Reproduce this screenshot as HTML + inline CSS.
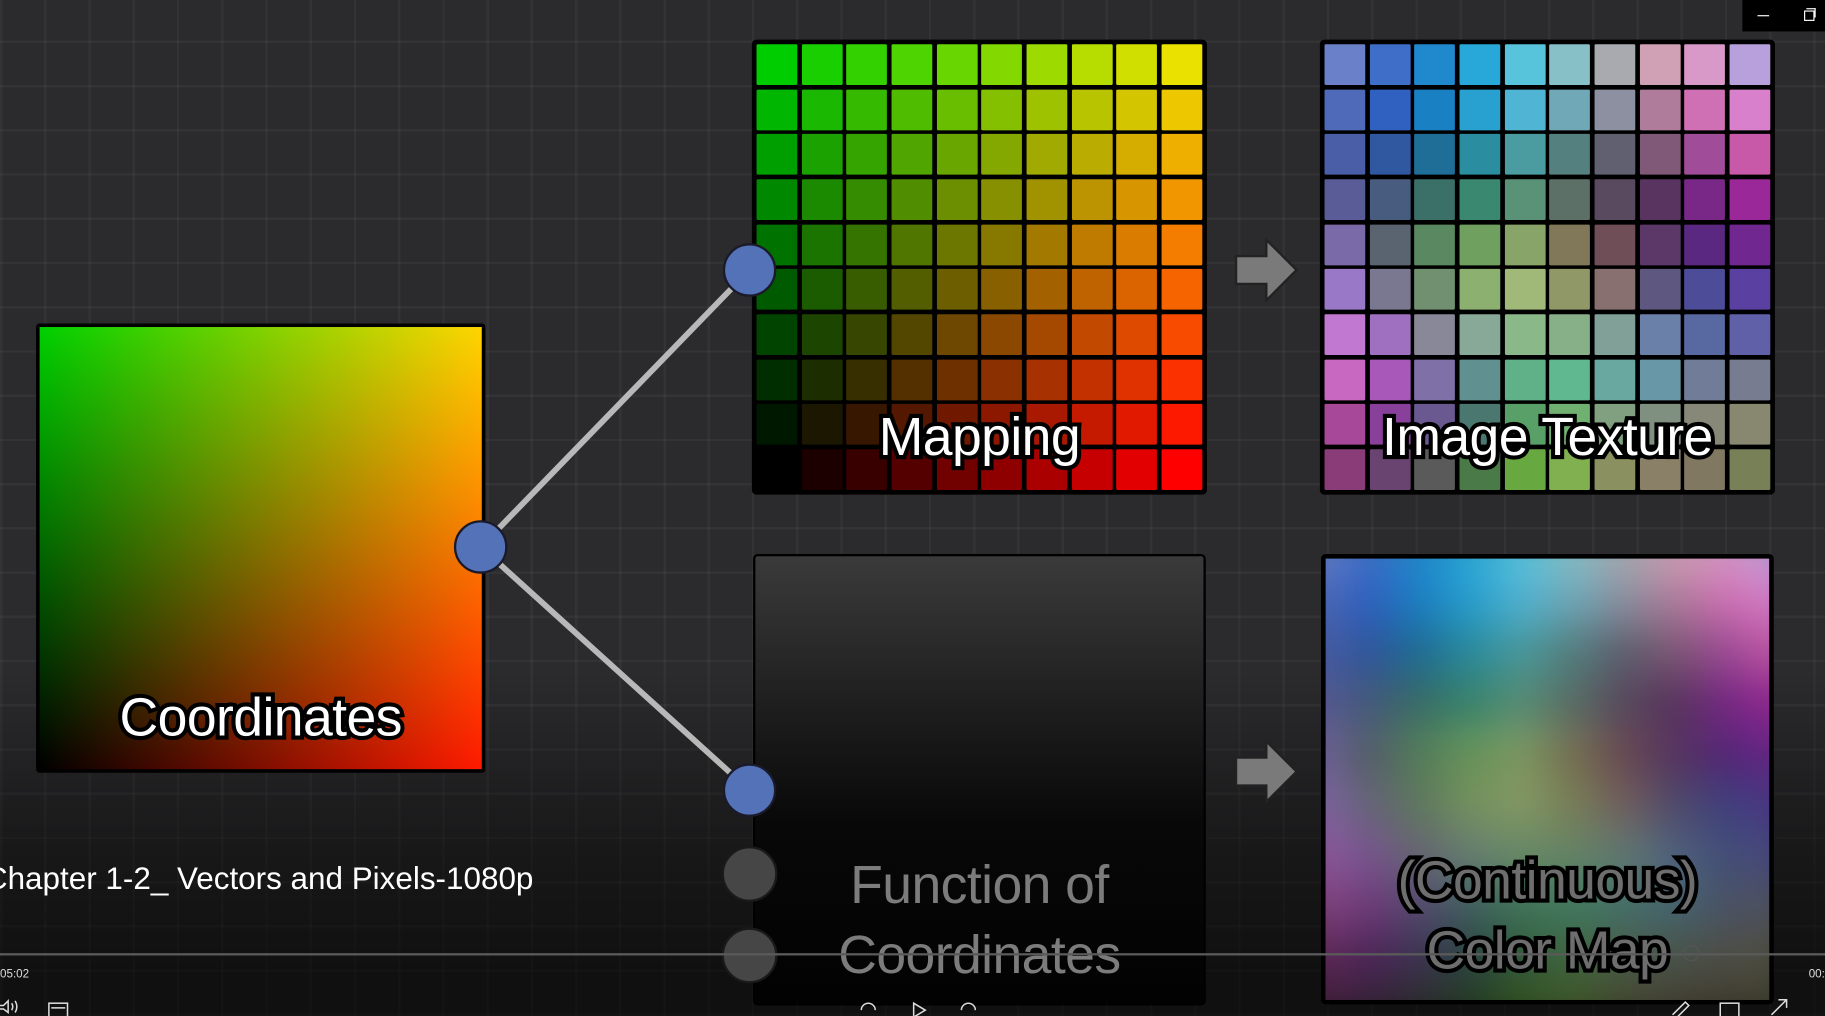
<!DOCTYPE html>
<html><head><meta charset="utf-8">
<style>
html,body{margin:0;padding:0;background:#111;overflow:hidden;}
#root{position:absolute;left:0;top:0;width:1568px;height:873px;transform-origin:0 0;transform:scale(1.16390,1.16380);
 background-color:#2b2b2d;overflow:hidden;font-family:"Liberation Sans",sans-serif;}
#bggrid{position:absolute;left:0;top:0;width:1568px;height:873px;
 background-image:repeating-linear-gradient(90deg,rgba(255,255,255,0.04) 0 2px,transparent 2px 38px),repeating-linear-gradient(0deg,rgba(255,255,255,0.04) 0 2px,transparent 2px 38px);}
#overlay{position:absolute;left:0;top:0;width:1568px;height:873px;background:linear-gradient(to bottom,rgba(0,0,0,0) 0,rgba(0,0,0,0) 66%,rgba(0,0,0,0.45) 84%,rgba(0,0,0,0.62) 95%,rgba(0,0,0,0.62) 100%);}
.abs{position:absolute;}
.coord{left:31px;top:278px;width:380px;height:380px;border:3px solid #000;border-radius:3px;
 background:linear-gradient(to right,#000,#ff1a00),linear-gradient(to bottom,#00d000,#000);background-blend-mode:screen;}
.grid{display:grid;grid-template-columns:repeat(10,1fr);grid-template-rows:repeat(10,1fr);gap:3.6px;padding:4px;background:#000;border-radius:4px;box-sizing:border-box;}
.grid div{border-radius:1px;}
.lbl{position:absolute;left:0;right:0;text-align:center;color:#fff;font-size:46px;-webkit-text-stroke:7px #000;paint-order:stroke fill;white-space:nowrap;letter-spacing:-0.5px;}
.node{position:absolute;width:46px;height:46px;border-radius:50%;background:#5472b8;border:2px solid #1a1a2a;box-sizing:border-box;}
.gnode{position:absolute;width:48px;height:48px;border-radius:50%;background:#464646;border:2px solid #1a1a1a;box-sizing:border-box;}
.func{left:647px;top:476px;width:389px;height:388px;border:2px solid #000;border-radius:4px;box-sizing:border-box;background:linear-gradient(#3a3a3a,#080808 60%,#020202);}
.cmap{left:1135px;top:476px;width:389px;height:387px;border:4px solid #000;border-radius:4px;box-sizing:border-box;overflow:hidden;}
.cmap .inner{position:absolute;left:-30px;top:-30px;right:-30px;bottom:-30px;display:grid;grid-template-columns:repeat(10,1fr);grid-template-rows:repeat(10,1fr);filter:blur(18px);}
</style></head><body>
<div id="root">
 <div id="bggrid"></div>
 <div id="overlay"></div>
 <svg class="abs" style="left:0;top:0" width="1568" height="873">
  <line x1="413" y1="470" x2="644" y2="232" stroke="#b8b8b8" stroke-width="5"/>
  <line x1="413" y1="470" x2="644" y2="679" stroke="#b8b8b8" stroke-width="5"/>
  <path d="M1062 220 H1088 V206 L1114 232 L1088 258 V244 H1062 Z" fill="#7a7a7a" stroke="#222" stroke-width="2"/>
  <path d="M1062 651 H1088 V637 L1114 663 L1088 689 V675 H1062 Z" fill="#7a7a7a" stroke="#222" stroke-width="2"/>
 </svg>
 <div class="abs coord"><div class="lbl" style="top:308px">Coordinates</div></div>
 <div class="abs grid" id="map" style="left:646px;top:34px;width:391px;height:391px;"></div>
 <div class="lbl" style="left:646px;width:391px;right:auto;top:348px">Mapping</div>
 <div class="abs grid" id="tex" style="left:1134px;top:34px;width:391px;height:391px;"></div>
 <div class="lbl" style="left:1134px;width:391px;right:auto;top:348px">Image Texture</div>
 <div class="abs func">
  <div class="lbl" style="top:255px;color:#7c7c7c;-webkit-text-stroke:0">Function of</div>
  <div class="lbl" style="top:315px;color:#7c7c7c;-webkit-text-stroke:0">Coordinates</div>
 </div>
 <div class="abs cmap"><div class="inner" id="cm"></div>
  <div style="position:absolute;left:0;right:0;top:0;bottom:0;background:linear-gradient(to bottom,rgba(0,0,0,0) 0,rgba(0,0,0,0.05) 40%,rgba(0,0,0,0.5) 100%)"></div>
  <div class="lbl" style="top:249px;color:#6e6e6e;">(Continuous)</div>
  <div class="lbl" style="top:309px;color:#6e6e6e;">Color Map</div>
 </div>
 <div class="node" style="left:390px;top:447px"></div>
 <div class="node" style="left:621px;top:209px"></div>
 <div class="node" style="left:621px;top:656px"></div>
 <div class="gnode" style="left:620px;top:727px"></div>
 <div class="gnode" style="left:620px;top:797px"></div>
 <div class="abs" style="left:-13px;top:740px;color:#fff;font-size:27px;white-space:nowrap;">Chapter 1-2_ Vectors and Pixels-1080p</div>
 <div class="abs" style="left:0;top:819px;width:1568px;height:2px;background:#5a5a5a"></div>
 <div class="abs" style="left:1446px;top:812px;width:14px;height:14px;border:1.5px solid #555;border-radius:50%;box-sizing:border-box"></div>
 <div class="abs" style="left:0;top:832px;color:#ddd;font-size:10px">05:02</div>
 <div class="abs" style="left:1554px;top:832px;color:#ddd;font-size:10px">00:</div>
 <svg class="abs" style="left:0;top:856px" width="1568" height="17">
  <g fill="none" stroke="#ddd" stroke-width="1.3">
   <path d="M0 8 H3 L7 4 V14 L3 11 H0"/><path d="M10 6 Q12 9 10 12"/><path d="M13 4 Q16 9 13 14"/>
   <rect x="42" y="6" width="16" height="12"/><line x1="44" y1="10" x2="56" y2="10"/>
   <path d="M740 12 A6 6 0 1 1 752 12"/><path d="M785 6 L795 12 L785 18 Z"/><path d="M826 12 A6 6 0 1 1 838 12"/>
   <path d="M1437 16 L1448 5 L1451 8 L1440 19"/><rect x="1478" y="6" width="16" height="12"/><path d="M1522 16 L1535 3 M1528 3 H1535 V10"/>
  </g>
 </svg>
 <div class="abs" style="left:1497px;top:0;width:71px;height:27px;background:#000">
  <div class="abs" style="left:13px;top:13px;width:10px;height:1.3px;background:#fff"></div>
  <div class="abs" style="left:53px;top:9px;width:7px;height:7px;border:1.2px solid #fff"></div>
  <div class="abs" style="left:55px;top:7px;width:7px;height:7px;border-top:1.2px solid #fff;border-right:1.2px solid #fff"></div>
 </div>
</div>
<script>
var map=document.getElementById('map');
for(var j=0;j<10;j++)for(var i=0;i<10;i++){
 var r=Math.round(i/9*(235+20*j/9)), g=Math.round((9-j)/9*205+ (i/9)*(9-j)/9*20), b=0;
 var d=document.createElement('div');d.style.background='rgb('+r+','+g+','+b+')';map.appendChild(d);}
var T=[
"6a80c8 3e6ec8 2088cc 28a8d8 58c4dc 88c0c8 a8aab0 d0a0b4 d898c8 b8a0dc",
"4e6ab8 3060c0 1a80c4 28a0d0 50b4d4 70a8b8 8c90a0 b07c9c d070b4 d880cc",
"4a5ea8 3058a0 1f6e98 2a8ea0 4a9ca0 548080 606070 805878 a04c98 c858a8",
"5a5c98 485c80 3a7068 3a8870 5a9278 5c7068 5a4a60 5a3460 7a2888 9a2898",
"7a6aa8 5a6470 5a8860 70a060 88a468 807858 704e58 5c3868 5a2880 702890",
"9a78c8 7a7890 709070 8cb070 a0b878 909868 887070 5e5880 4c4c98 5a40a0",
"c078d0 a070c0 888898 88a898 8ab888 88b088 80a098 6a80a8 5868a0 6060a8",
"c868c0 a858b8 8070a8 609090 60b088 60b890 68a8a0 6898a8 707c98 787c90",
"a84898 88409a 6a5890 4a7870 58a068 70b070 80a080 809080 888878 888870",
"8a3c78 6a4470 5a5a5a 4a7a48 68a840 80b050 8a9060 8a8068 807860 788058"];
var tex=document.getElementById('tex'),cm=document.getElementById('cm');
T.forEach(function(row){row.split(' ').forEach(function(c){
 var d=document.createElement('div');d.style.background='#'+c;tex.appendChild(d);
 var e=document.createElement('div');e.style.background='#'+c;cm.appendChild(e);});});
</script>
</body></html>
